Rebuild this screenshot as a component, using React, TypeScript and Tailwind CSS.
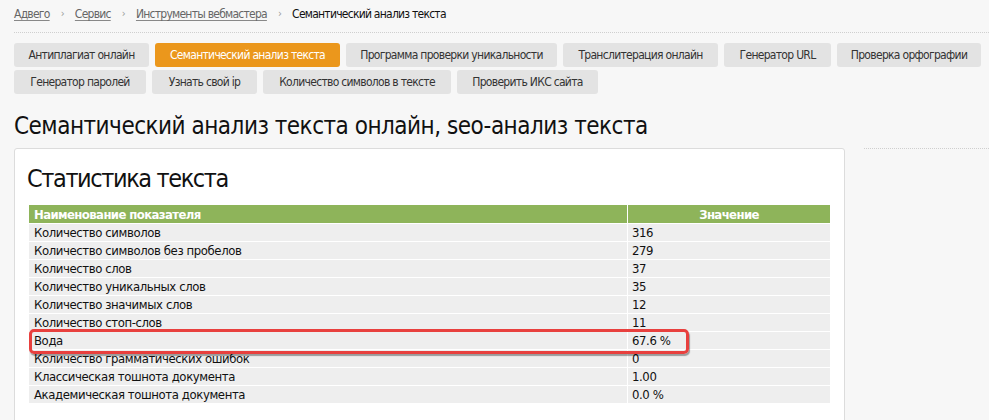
import React from "react";

const crumbs = ["Адвего", "Сервис", "Инструменты вебмастера"];

const tools: { label: string; w: string; active?: boolean }[] = [
  { label: "Антиплагиат онлайн", w: "w-[135px]" },
  { label: "Семантический анализ текста", w: "w-[185px]", active: true },
  { label: "Программа проверки уникальности", w: "w-[211px]" },
  { label: "Транслитерация онлайн", w: "w-[155px]" },
  { label: "Генератор URL", w: "w-[107px]" },
  { label: "Проверка орфографии", w: "w-[144px]" },
  { label: "Генератор паролей", w: "w-[132px]" },
  { label: "Узнать свой ip", w: "w-[105px]" },
  { label: "Количество символов в тексте", w: "w-[188px]" },
  { label: "Проверить ИКС сайта", w: "w-[141px]" },
];

const stats: [string, string][] = [
  ["Количество символов", "316"],
  ["Количество символов без пробелов", "279"],
  ["Количество слов", "37"],
  ["Количество уникальных слов", "35"],
  ["Количество значимых слов", "12"],
  ["Количество стоп-слов", "11"],
  ["Вода", "67.6 %"],
  ["Количество грамматических ошибок", "0"],
  ["Классическая тошнота документа", "1.00"],
  ["Академическая тошнота документа", "0.0 %"],
];

export default function App() {
  return (
    <div className="min-h-[420px] bg-[#f7f7f7] text-[#111] font-['DejaVu_Sans_Condensed','DejaVu_Sans',sans-serif] overflow-hidden">
      {/* Breadcrumbs */}
      <div className="pl-[14px] pt-[7px] h-[32px] flex items-start text-[12px] leading-[14px] tracking-[-0.75px]">
        {crumbs.map((c) => (
          <React.Fragment key={c}>
            <a href="#" className="text-[#666] underline decoration-[#888] underline-offset-2">
              {c}
            </a>
            <span className="text-[#999] mx-[11px] text-[11px]">›</span>
          </React.Fragment>
        ))}
        <span className="text-[#111]">Семантический анализ текста</span>
      </div>
      <div className="ml-[14px] border-t border-dotted border-[#cfcfcf]" />

      {/* Tool buttons */}
      <div className="pl-[14px] pt-[10px]">
        <div className="w-[975px] flex flex-wrap gap-x-[6px] gap-y-[3px]">
          {tools.map((t) => (
            <button
              key={t.label}
              className={`${t.w} h-[24px] rounded-[3px] text-[12px] tracking-[-0.7px] whitespace-nowrap flex items-center justify-center ${
                t.active ? "bg-[#eb971c] text-white" : "bg-[#e3e3e3] text-[#333]"
              }`}
            >
              {t.label}
            </button>
          ))}
        </div>
      </div>

      {/* Title */}
      <h1 className="pl-[14px] mt-[16px] text-[24px] leading-[32px] tracking-[-0.5px] text-[#111]">
        Семантический анализ текста онлайн, seo-анализ текста
      </h1>

      <div className="flex mt-[6px] pl-[14px]">
        {/* Card */}
        <div className="w-[831px] h-[300px] bg-white border border-[#dcdcdc] rounded-[3px] px-[14px] pt-[13px]">
          <h2 className="-ml-[2px] text-[25px] leading-[34px] tracking-[-1.4px] text-[#111]">Статистика текста</h2>
          <div className="relative mt-[9px]">
            <table className="w-[801px] border-separate border-spacing-0 text-[13px] tracking-[-0.4px]">
              <thead>
                <tr className="bg-[#8eb45a] text-white font-bold">
                  <th className="h-[18px] text-left pl-[5px] w-[599px] border-r border-white leading-[17px] tracking-[-0.6px]">
                    Наименование показателя
                  </th>
                  <th className="text-center leading-[17px] tracking-[-0.6px]">Значение</th>
                </tr>
              </thead>
              <tbody>
                {stats.map(([k, v]) => (
                  <tr key={k} className="bg-[#eeeeee]">
                    <td className="h-[18px] pl-[5px] border-r border-t border-white leading-[17px]">{k}</td>
                    <td className="pl-[4px] border-t border-white leading-[17px]">{v}</td>
                  </tr>
                ))}
              </tbody>
            </table>
            {/* Highlight around "Вода" */}
            <div className="absolute left-0 top-[124px] w-[660px] h-[25px] border-[3px] border-[#e8403e] rounded-[5px] shadow-[1px_2px_1px_rgba(0,0,0,0.35)]" />
          </div>
        </div>
        {/* Sidebar */}
        <div className="ml-[19px] flex-1 border-t border-dotted border-[#cfcfcf] h-0" />
      </div>
    </div>
  );
}
